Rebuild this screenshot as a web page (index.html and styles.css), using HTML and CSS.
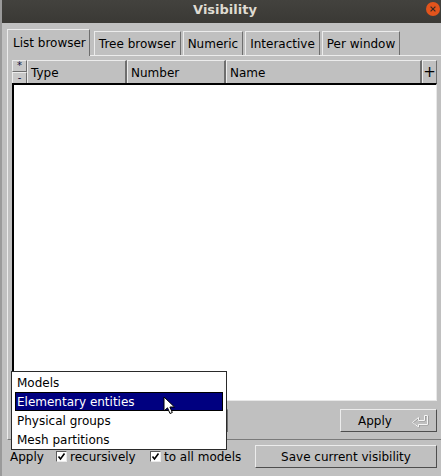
FILE: index.html
```html
<!DOCTYPE html>
<html>
<head>
<meta charset="utf-8">
<title>Visibility</title>
<link rel="stylesheet" href="styles.css">
</head>
<body>
<div class="window">
  <div class="titlebar">
    <span></span>
    <span class="title">Visibility</span>
    <span class="close"><svg width="14" height="14" viewBox="0 0 14 14"><circle cx="7" cy="7" r="7" fill="#e2541c"/><path d="M4.6 4.6 L9.4 9.4 M9.4 4.6 L4.6 9.4" stroke="#3a2a22" stroke-width="1.2"/></svg></span>
  </div>
  <div class="content">
    <div class="tabs">
      <div class="tab active">List browser</div>
      <div class="tab">Tree browser</div>
      <div class="tab">Numeric</div>
      <div class="tab">Interactive</div>
      <div class="tab">Per window</div>
    </div>
    <div class="panel">
      <div class="browser">
        <div class="header">
          <div class="sel">
            <div class="mini">*</div>
            <div class="mini">-</div>
          </div>
          <div class="col col-type">Type</div>
          <div class="col col-num">Number</div>
          <div class="col col-name">Name</div>
          <div class="col col-plus">+</div>
        </div>
        <div class="rows"></div>
      </div>
      <div class="actions">
        <div class="choice"></div>
        <div class="btn apply">
          <span>Apply</span>
          <svg class="ret" width="18" height="14" viewBox="0 0 18 14">
            <path d="M1.5 8.5 L7.5 3.5 L7.5 6.5 L13.5 6.5 L13.5 1.5 L16.5 1.5 L16.5 10.5 L7.5 10.5 L7.5 13 Z" fill="none" stroke="#8a8a8a" stroke-width="1" transform="translate(0.6 0.4)"/>
            <path d="M1.5 8.5 L7.5 3.5 L7.5 6.5 L13.5 6.5 L13.5 1.5 L16.5 1.5 L16.5 10.5 L7.5 10.5 L7.5 13 Z" fill="none" stroke="#f6f6f6" stroke-width="1"/>
          </svg>
        </div>
      </div>
    </div>
    <div class="footer">
      <span class="lbl">Apply</span>
      <span class="check first"><span class="box"><svg width="9" height="9" viewBox="0 0 9 9"><path d="M1.5 4.5 L3.5 7 L7.5 1.5" fill="none" stroke="#000" stroke-width="1.6"/></svg></span><span>recursively</span></span>
      <span class="check second"><span class="box"><svg width="9" height="9" viewBox="0 0 9 9"><path d="M1.5 4.5 L3.5 7 L7.5 1.5" fill="none" stroke="#000" stroke-width="1.6"/></svg></span><span>to all models</span></span>
      <div class="btn save">Save current visibility</div>
    </div>
  </div>
  <div class="popup">
    <div class="item">Models</div>
    <div class="item hl">Elementary entities</div>
    <div class="item">Physical groups</div>
    <div class="item">Mesh partitions</div>
  </div>
  <svg class="cursor" width="14" height="20" viewBox="0 0 14 20">
    <path d="M1 1 L1 15 L4.5 11.8 L7 17.5 L9.3 16.5 L6.9 11 L11.5 11 Z" fill="#fff" stroke="#000" stroke-width="1" stroke-linejoin="miter"/>
  </svg>
</div>
</body>
</html>
```
FILE: styles.css
```css
html, body {
  margin: 0;
  padding: 0;
}
body {
  width: 441px;
  height: 476px;
  overflow: hidden;
  background: #c0c0c0;
  font-family: "DejaVu Sans", sans-serif;
  font-size: 12px;
  color: #000;
}
.window {
  position: relative;
  width: 441px;
  height: 476px;
  box-sizing: border-box;
  border-left: 2px solid #9a9a9a;
  background: #c0c0c0;
  overflow: hidden;
}
.titlebar {
  height: 23px;
  margin-left: -2px;
  background: linear-gradient(#43423e, #3a3935);
  display: grid;
  grid-template-columns: 1fr auto 1fr;
  align-items: center;
  padding: 0 0 4px 9px;
  box-sizing: border-box;
}
.title {
  font-weight: bold;
  font-size: 13px;
  color: #dfdbd2;
}
.close {
  justify-self: end;
  display: flex;
  margin-right: 1px;
  margin-top: -2px;
}
.content {
  padding: 6px 0 0 5px;
}
.tabs {
  display: flex;
  align-items: flex-end;
  height: 26px;
  gap: 2px;
}
.tab {
  height: 24px;
  box-sizing: border-box;
  padding: 1px 4px 0;
  display: flex;
  align-items: center;
  border-top: 1px solid #ececec;
  border-left: 1px solid #ececec;
  border-right: 1px solid #6e6e6e;
  white-space: nowrap;
}
.tab.active {
  height: 27px;
  margin-bottom: -1px;
  padding: 1px 3px 1px 5px;
  position: relative;
  z-index: 1;
  background: #c0c0c0;
  margin-right: 2px;
}
.panel {
  border-top: 1px solid #ececec;
  border-left: 1px solid #ececec;
  border-bottom: 1px solid #7a7a7a;
  padding: 4px 4px 7px 4px;
}
.browser {
  display: flex;
  flex-direction: column;
}
.header {
  display: flex;
  height: 23px;
}
.sel {
  width: 15px;
  display: flex;
  flex-direction: column;
}
.mini {
  flex: 1;
  box-sizing: border-box;
  border-top: 1px solid #ececec;
  border-left: 1px solid #ececec;
  border-right: 1px solid #6e6e6e;
  border-bottom: 1px solid #6e6e6e;
  font-size: 10px;
  line-height: 10px;
  text-align: center;
  color: #101040;
  background: #c8c8c8;
}
.col {
  box-sizing: border-box;
  border-top: 1px solid #ececec;
  border-left: 1px solid #ececec;
  border-right: 2px solid #6e6e6e;
  display: flex;
  align-items: center;
  padding-left: 3px;
  padding-top: 1px;
}
.col-type { width: 100px; }
.col-num { width: 99px; }
.col-name { flex: 1; }
.col-plus {
  width: 15px;
  padding: 0;
  justify-content: center;
  font-size: 15px;
  border-right: 1px solid #6e6e6e;
}
.rows {
  height: 318px;
  background: #fff;
  box-sizing: border-box;
  border-top: 2px solid #000;
  border-left: 2px solid #000;
  border-right: 1px solid #e8e8e8;
  border-bottom: 1px solid #e8e8e8;
}
.actions {
  margin-top: 8px;
  height: 23px;
  display: flex;
  justify-content: space-between;
}
.choice {
  width: 216px;
  box-sizing: border-box;
  border-top: 1px solid #ececec;
  border-left: 1px solid #ececec;
  border-right: 2px solid #6e6e6e;
  border-bottom: 1px solid #6e6e6e;
}
.btn {
  box-sizing: border-box;
  border-top: 1px solid #ececec;
  border-left: 1px solid #ececec;
  border-right: 1px solid #4e4e4e;
  border-bottom: 1px solid #4e4e4e;
  display: flex;
  align-items: center;
  height: 23px;
}
.apply {
  width: 97px;
  padding-left: 17px;
}
.apply .ret {
  margin-left: 19px;
}
.footer {
  display: flex;
  align-items: center;
  padding: 5px 4px 0 3px;
  height: 23px;
}
.lbl {
  width: 46px;
}
.check {
  display: flex;
  align-items: center;
  gap: 3px;
}
.check.first { width: 94px; }
.box {
  width: 11px;
  height: 11px;
  box-sizing: border-box;
  background: #fff;
  border-top: 1px solid #5a5a5a;
  border-left: 1px solid #5a5a5a;
  border-right: 1px solid #eaeaea;
  border-bottom: 1px solid #eaeaea;
  display: flex;
  align-items: center;
  justify-content: center;
}
.save {
  margin-left: auto;
  width: 182px;
  justify-content: center;
}
.popup {
  position: absolute;
  left: 9px;
  top: 371px;
  width: 216px;
  height: 79px;
  box-sizing: border-box;
  background: #fff;
  border: 1px solid #2a2a2a;
  padding: 1px 3px;
}
.item {
  height: 19px;
  line-height: 20px;
  padding-left: 2px;
  white-space: nowrap;
}
.item.hl {
  background: #000080;
  color: #fff;
  outline: 1px solid #000;
  outline-offset: -1px;
}
.cursor {
  position: absolute;
  left: 161px;
  top: 396px;
}
```
